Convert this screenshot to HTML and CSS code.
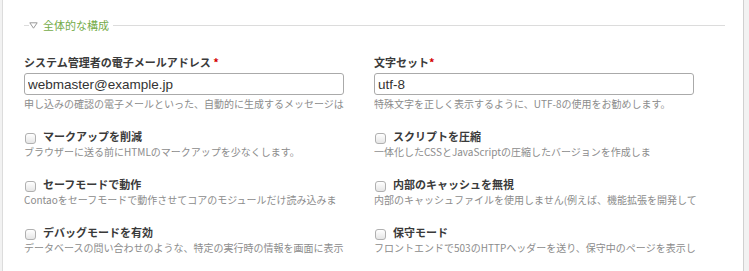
FILE: index.html
```html
<!DOCTYPE html>
<html lang="ja">
<head>
    <meta charset="UTF-8">
    <title>全体的な構成</title>
    <link rel="stylesheet" href="styles.css">
</head>
<body>
    <div id="main">
        <div class="legend">
            <span class="legend-lead"></span>
            <svg class="legend-toggle" width="9" height="7" viewBox="0 0 9 7">
                <path d="M0.8 0.8 L8.2 0.8 L4.5 6.2 Z" fill="none" stroke="#9a9a9a" stroke-width="1"/>
            </svg>
            <span class="legend-title">全体的な構成</span>
            <span class="legend-line"></span>
        </div>

        <div class="fields">
            <div class="widget">
                <h3 class="field-label">システム管理者の電子メールアドレス <span class="mandatory">*</span></h3>
                <input class="text" type="text" value="webmaster@example.jp">
                <p class="help">申し込みの確認の電子メールといった、自動的に生成するメッセージは</p>
            </div>
            <div class="widget">
                <h3 class="field-label">文字セット<span class="mandatory">*</span></h3>
                <input class="text" type="text" value="utf-8">
                <p class="help">特殊文字を正しく表示するように、UTF-8の使用をお勧めします。</p>
            </div>

            <div class="widget check">
                <label class="check-label"><input type="checkbox"> マークアップを削減</label>
                <p class="help">ブラウザーに送る前にHTMLのマークアップを少なくします。</p>
            </div>
            <div class="widget check">
                <label class="check-label"><input type="checkbox"> スクリプトを圧縮</label>
                <p class="help">一体化したCSSとJavaScriptの圧縮したバージョンを作成しま</p>
            </div>

            <div class="widget check">
                <label class="check-label"><input type="checkbox"> セーフモードで動作</label>
                <p class="help">Contaoをセーフモードで動作させてコアのモジュールだけ読み込みま</p>
            </div>
            <div class="widget check">
                <label class="check-label"><input type="checkbox"> 内部のキャッシュを無視</label>
                <p class="help">内部のキャッシュファイルを使用しません(例えば、機能拡張を開発して</p>
            </div>

            <div class="widget check">
                <label class="check-label"><input type="checkbox"> デバッグモードを有効</label>
                <p class="help">データベースの問い合わせのような、特定の実行時の情報を画面に表示</p>
            </div>
            <div class="widget check">
                <label class="check-label"><input type="checkbox"> 保守モード</label>
                <p class="help">フロントエンドで503のHTTPヘッダーを送り、保守中のページを表示し</p>
            </div>
        </div>
    </div>
</body>
</html>
```

FILE: styles.css
```css
body {
    margin: 0;
    padding: 0;
    background-color: #f2f2f2;
    font-family: "Noto Sans CJK JP", "DejaVu Sans", sans-serif;
    color: #444;
    overflow: hidden;
}

/* panneau principal, bordure grise à gauche et à droite */
#main {
    margin-left: 2px;
    width: 742px;
    height: 271px;
    background-color: #fff;
    border-left: 1px solid #dcdcdc;
    border-right: 1px solid #d0d0d0;
    padding: 18px 0 0 21px;
    box-sizing: border-box;
}

.legend {
    display: flex;
    align-items: center;
    width: 701px;
    height: 14px;
}

.legend-lead {
    width: 5px;
    border-top: 1px solid #dcdcdc;
}

.legend-toggle {
    margin: 0 5px 0 0;
}

.legend-title {
    color: #74ab49;
    font-size: 11px;
    line-height: 14px;
}

.legend-line {
    flex: 1;
    border-top: 1px solid #dcdcdc;
    margin-left: 4px;
}

.fields {
    display: grid;
    grid-template-columns: 350px 350px;
    margin-top: 22px;
}

.widget {
    min-width: 0;
}

.widget.check {
    margin-top: 16px;
}

.field-label {
    margin: 0;
    font-size: 11px;
    line-height: 16px;
    font-weight: bold;
    color: #3a3a3a;
}

.mandatory {
    color: #d40000;
}

input.text {
    display: block;
    width: 320px;
    height: 22px;
    margin: 3px 0 0 0;
    padding: 0 3px;
    box-sizing: border-box;
    border: 1px solid #aaa;
    border-radius: 3px;
    font-family: "Liberation Sans", "Noto Sans CJK JP", sans-serif;
    font-size: 13.5px;
    color: #333;
    background-color: #fff;
}

.help {
    margin: 1px 0 0 0;
    width: 345px;
    height: 16px;
    overflow: hidden;
    font-size: 10px;
    line-height: 16px;
    color: #8c8c8c;
}

.widget.check .help {
    margin-top: 0;
}

.check-label {
    display: flex;
    align-items: center;
    font-size: 11px;
    line-height: 16px;
    font-weight: bold;
    color: #3a3a3a;
}

.check-label input {
    -webkit-appearance: none;
    appearance: none;
    width: 11px;
    height: 11px;
    margin: 5px 7px 0 1px;
    border: 1px solid #b0b0b0;
    border-radius: 3px;
    background: linear-gradient(#ffffff, #e6e6e6);
}
```
